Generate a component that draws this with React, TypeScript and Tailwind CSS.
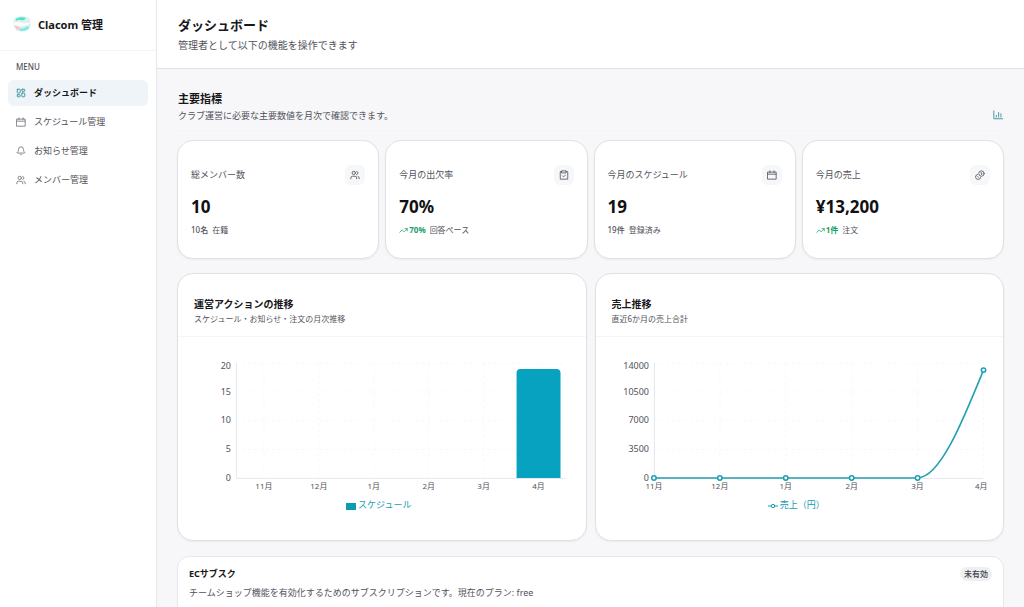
import type { ReactNode } from 'react';
import { Bell, LayoutDashboard, TrendingUp, Users } from 'lucide-react';

type IconComponent = (props: { className?: string }) => ReactNode;

const months = ['11月', '12月', '1月', '2月', '3月', '4月'];

function StrokeIcon({ className, children }: { className?: string; children: ReactNode }) {
  return (
    <svg
      viewBox="0 0 24 24"
      className={className}
      fill="none"
      stroke="currentColor"
      strokeWidth="2"
      strokeLinecap="round"
      strokeLinejoin="round"
      aria-hidden="true"
    >
      {children}
    </svg>
  );
}

const CalendarIcon: IconComponent = ({ className }) => (
  <StrokeIcon className={className}>
    <path d="M2 5H22V22H2ZM2 10H22M7 2V6M17 2V6" />
  </StrokeIcon>
);

const ClipboardIcon: IconComponent = ({ className }) => (
  <StrokeIcon className={className}>
    <path d="M7 4H3V22H21V4H17M7 2H17V7H7ZM8.5 14L11 16.5L15.5 12" />
  </StrokeIcon>
);

const CoinsIcon: IconComponent = ({ className }) => (
  <StrokeIcon className={className}>
    <circle cx="15.5" cy="8.5" r="6.5" />
    <path d="M6 10.5A6.2 6.2 0 1 0 13.5 18M14.5 6.5H16V11M6.5 15.5L8.5 17.5" />
  </StrokeIcon>
);

const ChartIcon: IconComponent = ({ className }) => (
  <StrokeIcon className={className}>
    <path d="M2 2V21H23M8 17V13M13.5 17V6M19 17V9" />
  </StrokeIcon>
);

const menu: { label: string; icon: IconComponent; active?: boolean }[] = [
  { label: 'ダッシュボード', icon: (p) => <LayoutDashboard {...p} />, active: true },
  { label: 'スケジュール管理', icon: CalendarIcon },
  { label: 'お知らせ管理', icon: (p) => <Bell {...p} /> },
  { label: 'メンバー管理', icon: (p) => <Users {...p} /> },
];

interface Metric {
  label: string;
  value: string;
  count: string;
  note: string;
  icon: IconComponent;
  trend?: boolean;
}

const metrics: Metric[] = [
  { label: '総メンバー数', value: '10', count: '10名', note: '在籍', icon: (p) => <Users {...p} /> },
  { label: '今月の出欠率', value: '70%', count: '70%', note: '回答ペース', icon: ClipboardIcon, trend: true },
  { label: '今月のスケジュール', value: '19', count: '19件', note: '登録済み', icon: CalendarIcon },
  { label: '今月の売上', value: '¥13,200', count: '1件', note: '注文', icon: CoinsIcon, trend: true },
];

function Logo() {
  return (
    <svg viewBox="0 0 20 18" className="h-[18px] w-5" aria-hidden="true">
      <defs>
        <linearGradient id="logo-base" x1="0" y1="0" x2="1" y2="1">
          <stop offset="0" stopColor="#bff3e6" />
          <stop offset="0.55" stopColor="#e4eff1" />
          <stop offset="1" stopColor="#a5ece9" />
        </linearGradient>
        <filter id="logo-soft">
          <feGaussianBlur stdDeviation="0.7" />
        </filter>
      </defs>
      <path d="M4 1.5Q10 -1 16 1.5Q19 3 18.5 8Q18 13 15 14.5Q10 16.5 5 14.5Q2 13 1.5 8Q1 3 4 1.5Z" fill="url(#logo-base)" />
      <g filter="url(#logo-soft)">
        <path d="M4 3Q8 0 14 2Q12 5 9 4Q6 3 4 5Z" fill="#4fe3c1" />
        <path d="M1 6Q6 5 11 7Q15 8 19 5L17 9Q10 11 2 10Z" fill="#fcfcfc" />
        <path d="M2 9Q7 10 9 13L5 14Z" fill="#f3c9cf" />
        <path d="M8 13.5Q13 14.5 16 11" stroke="#79e6e0" strokeWidth="2" fill="none" />
      </g>
    </svg>
  );
}

function Sidebar() {
  return (
    <aside className="flex w-[157px] shrink-0 flex-col border-r border-[#e6e7ea] bg-white">
      <div className="flex h-[51px] items-center gap-1.5 border-b border-[#f3f3f5] px-3">
        <Logo />
        <span className="text-[11px] font-bold text-[#18181b]">Clacom 管理</span>
      </div>
      <nav className="px-2 pt-2.5">
        <p className="mb-[7px] px-2 text-[8px] leading-3 font-medium text-[#52525b]">MENU</p>
        <ul className="flex flex-col gap-[3px]">
          {menu.map(({ label, icon: Icon, active }) => (
            <li key={label}>
              <a
                href="#"
                className={
                  active
                    ? 'flex h-[26px] items-center gap-2 rounded-md bg-[#eff4f8] px-2 text-[9px] font-bold text-[#18181b]'
                    : 'flex h-[26px] items-center gap-2 rounded-md px-2 text-[9px] text-[#52525b]'
                }
              >
                <Icon className={active ? 'size-2.5 text-[#2d8799]' : 'size-2.5 text-[#71717a]'} />
                {label}
              </a>
            </li>
          ))}
        </ul>
      </nav>
    </aside>
  );
}

function MetricCard({ label, value, count, note, icon: Icon, trend }: Metric) {
  return (
    <article className="rounded-2xl border border-[#e1e1e5] bg-white px-[13px] pt-6 pb-[22px] shadow-xs">
      <div className="flex h-5 items-center justify-between">
        <h3 className="text-[9px] text-[#52525b]">{label}</h3>
        <span className="flex size-5 items-center justify-center rounded-md bg-[#f6f7f9]">
          <Icon className="size-2.5 text-[#52525b]" />
        </span>
      </div>
      <p className="mt-2.5 text-[17px] leading-6 font-bold text-[#111113]">{value}</p>
      <p className="mt-[5px] flex items-center gap-1 text-[8px] leading-3 text-[#52525b]">
        {trend ? (
          <span className="flex items-center gap-px font-bold text-[#16a06a]">
            <TrendingUp className="size-[9px]" />
            {count}
          </span>
        ) : (
          <span className="font-medium">{count}</span>
        )}
        <span>{note}</span>
      </p>
    </article>
  );
}

function ChartCard({ title, note, children }: { title: string; note: string; children: ReactNode }) {
  return (
    <article className="rounded-2xl border border-[#e1e1e5] bg-white pb-[27px] shadow-xs">
      <header className="border-b border-[#f5f5f6] px-4 pt-[22px] pb-2.5">
        <h3 className="text-[10px] leading-4 font-bold text-[#18181b]">{title}</h3>
        <p className="text-[8px] leading-[14px] text-[#52525b]">{note}</p>
      </header>
      <div className="px-4 pt-5">{children}</div>
    </article>
  );
}

// Plot area: x 42-372, y 6-121
function Axes({ ticks, columns }: { ticks: string[]; columns: number[] }) {
  return (
    <>
      <g stroke="#f8f8f9" strokeDasharray="3 3">
        {ticks.slice(1).map((t, i) => (
          <line key={t} x1="42" x2="372" y1={92.5 - i * 28.75} y2={92.5 - i * 28.75} />
        ))}
        {columns.map((x) => (
          <line key={x} x1={x} x2={x} y1="6" y2="121" />
        ))}
      </g>
      <path d="M42.5 6V121.5H372" fill="none" stroke="#e8e8ea" />
      <g fill="#52525b" fontSize="9" textAnchor="end">
        {ticks.map((t, i) => (
          <text key={t} x="37" y={i === 4 ? 12 : 124 - i * 28.75}>
            {t}
          </text>
        ))}
      </g>
    </>
  );
}

function ActionsChart() {
  const columns = months.map((_, i) => 70 + i * 55);
  return (
    <>
      <svg viewBox="0 0 376 138" className="h-[138px] w-full" role="img" aria-label="運営アクションの推移">
        <Axes ticks={['0', '5', '10', '15', '20']} columns={columns} />
        <path d="M323 121V16Q323 12 327 12H363Q367 12 367 16V121Z" fill="#06a2c0" />
        <g fill="#52525b" fontSize="8" textAnchor="middle">
          {months.map((m, i) => (
            <text key={m} x={columns[i]} y="132">
              {m}
            </text>
          ))}
        </g>
      </svg>
      <p className="flex items-center justify-center gap-0.5 pt-0.5 pr-1.5 text-[9px] leading-4 text-[#159db3]">
        <span className="mt-0.5 h-[7px] w-2.5 bg-[#0b9bb3]" />
        スケジュール
      </p>
    </>
  );
}

function SalesChart() {
  const columns = months.map((_, i) => 42 + i * 66);
  return (
    <>
      <svg viewBox="0 0 376 138" className="h-[138px] w-full" role="img" aria-label="売上推移">
        <Axes ticks={['0', '3500', '7000', '10500', '14000']} columns={columns} />
        <path d="M42 121H306C328 121 350 67 372 13" fill="none" stroke="#249fb3" strokeWidth="1.6" />
        <g fill="#fff" stroke="#169fb4" strokeWidth="1.5">
          {columns.map((x, i) => (
            <circle key={x} cx={x} cy={i === 5 ? 13 : 121} r="2.2" />
          ))}
        </g>
        <g fill="#52525b" fontSize="8">
          {months.map((m, i) => (
            <text key={m} x={i === 5 ? 376 : columns[i]} y="132" textAnchor={i === 5 ? 'end' : 'middle'}>
              {m}
            </text>
          ))}
        </g>
      </svg>
      <p className="flex items-center justify-center gap-0.5 pt-0.5 pr-1.5 text-[9px] leading-4 text-[#159db3]">
        <svg viewBox="0 0 10 8" className="mt-0.5 h-2 w-2.5" fill="none" stroke="currentColor" aria-hidden="true">
          <path d="M0 4H3.2M6.8 4H10" />
          <circle cx="5" cy="4" r="1.7" />
        </svg>
        売上（円）
      </p>
    </>
  );
}

export default function App() {
  return (
    <div className="flex h-screen bg-[#f7f7f9] font-['Noto_Sans','Noto_Sans_CJK_JP',sans-serif] text-[#18181b]">
      <Sidebar />
      <main className="min-w-0 flex-1 overflow-y-auto [scrollbar-width:none]">
        <header className="border-b border-[#e1e1e5] bg-white px-[21px] pt-4 pb-[14px]">
          <h1 className="text-[13px] leading-[18px] font-bold">ダッシュボード</h1>
          <p className="pt-0.5 text-[10px] leading-[18px] text-[#52525b]">管理者として以下の機能を操作できます</p>
        </header>

        <div className="px-5 pt-[21px] pb-6">
          {/* Key metrics */}
          <div className="mb-[9px] flex items-end justify-between border-b border-[#f4f4f6] px-px pb-1.5">
            <div>
              <h2 className="text-[11px] leading-[18px] font-bold">主要指標</h2>
              <p className="text-[9px] leading-4 text-[#52525b]">クラブ運営に必要な主要数値を月次で確認できます。</p>
            </div>
            <ChartIcon className="mb-1 size-2.5 text-[#2d8799]" />
          </div>
          <section className="grid grid-cols-4 gap-1.5">
            {metrics.map((metric) => (
              <MetricCard key={metric.label} {...metric} />
            ))}
          </section>

          {/* Monthly charts */}
          <section className="mt-[14px] grid grid-cols-2 gap-2">
            <ChartCard title="運営アクションの推移" note="スケジュール・お知らせ・注文の月次推移">
              <ActionsChart />
            </ChartCard>
            <ChartCard title="売上推移" note="直近6か月の売上合計">
              <SalesChart />
            </ChartCard>
          </section>

          {/* Subscription */}
          <section className="mt-[15px] rounded-xl border border-[#e8e8eb] bg-white px-[11px] pt-[9px] pb-6">
            <div className="flex items-center justify-between">
              <h2 className="text-[9px] leading-4 font-bold">ECサブスク</h2>
              <span className="rounded-full bg-[#eeeff2] px-1 text-[8px] leading-[14px] font-medium text-[#3f3f46]">未有効</span>
            </div>
            <p className="border-b border-[#f1f1f3] pt-0.5 pb-[5px] text-[9px] leading-[18px] text-[#52525b]">
              チームショップ機能を有効化するためのサブスクリプションです。現在のプラン: free
            </p>
          </section>
        </div>
      </main>
    </div>
  );
}
